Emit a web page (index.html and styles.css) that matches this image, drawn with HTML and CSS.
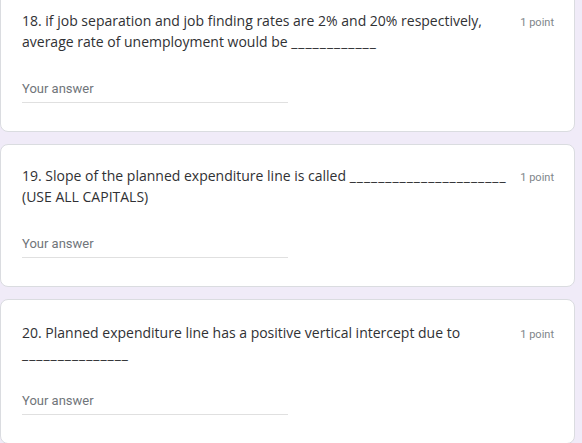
FILE: index.html
```html
<!DOCTYPE html>
<html>
<head>
<meta charset="utf-8">
<link rel="stylesheet" href="styles.css">
</head>
<body>
<div class="page">
  <div class="card">
    <div class="head">
      <div class="question">18. if job separation and job finding rates are 2% and 20% respectively, average rate of unemployment would be <span class="blank">____________</span></div>
      <div class="points">1 point</div>
    </div>
    <div class="answer">Your answer</div>
  </div>
  <div class="card">
    <div class="head">
      <div class="question">19. Slope of the planned expenditure line is called <span class="blank">______________________</span> (USE ALL CAPITALS)</div>
      <div class="points">1 point</div>
    </div>
    <div class="answer">Your answer</div>
  </div>
  <div class="card card-tall">
    <div class="head">
      <div class="question">20. Planned expenditure line has a positive vertical intercept due to <span class="blank">_______________</span></div>
      <div class="points">1 point</div>
    </div>
    <div class="answer">Your answer</div>
  </div>
</div>
</body>
</html>
```
FILE: styles.css
```css
html, body {
  margin: 0;
  padding: 0;
  background: #f0ebf8;
}
.page {
  margin-top: -11px;
  width: 575px;
  display: flex;
  flex-direction: column;
  gap: 12px;
}
.card {
  background: #ffffff;
  border: 1px solid #dadce0;
  border-radius: 8px;
  padding: 20px 20px 28px 21px;
}
.card-tall {
  padding-top: 22px;
}
.head {
  display: flex;
  align-items: flex-start;
}
.question {
  flex: 1;
  font-family: "Open Sans", "Liberation Sans", sans-serif;
  font-size: 14px;
  line-height: 21px;
  color: #303134;
}
.blank {
  letter-spacing: 1px;
}
.points {
  flex: none;
  margin-left: 10px;
  margin-top: 5px;
  font-family: Roboto, "Liberation Sans", sans-serif;
  font-size: 11px;
  line-height: 16px;
  color: #80868b;
}
.answer {
  margin-top: 27px;
  width: 266px;
  font-family: Roboto, "Liberation Sans", sans-serif;
  font-size: 13px;
  line-height: 20px;
  color: #70757a;
  padding-bottom: 3px;
  border-bottom: 1px solid #e0e0e0;
}
```
